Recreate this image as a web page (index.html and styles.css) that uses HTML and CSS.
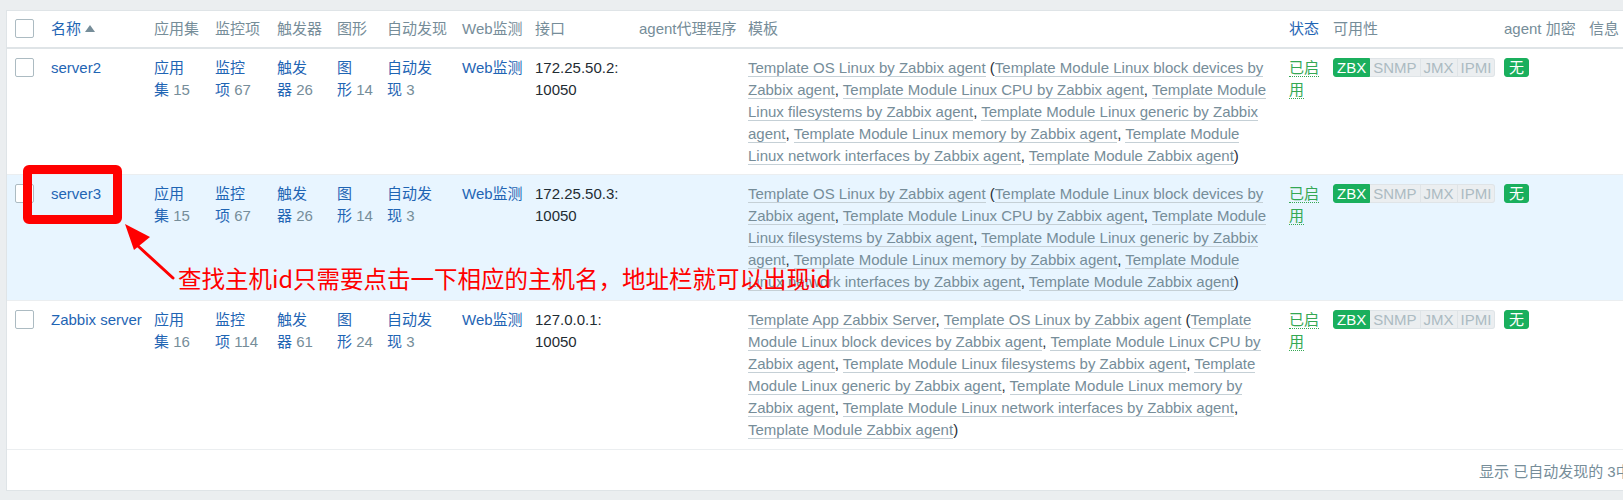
FILE: index.html
```html
<!DOCTYPE html>
<html lang="zh-CN">
<head>
<meta charset="utf-8">
<title>主机</title>
<link rel="stylesheet" href="styles.css">
</head>
<body>
<div class="panel">
  <table class="list">
    <colgroup>
      <col class="c-cb"><col class="c-name"><col class="c-app"><col class="c-items"><col class="c-trig"><col class="c-graph"><col class="c-disc"><col class="c-web"><col class="c-iface"><col class="c-proxy"><col class="c-tpl"><col class="c-status"><col class="c-avail"><col class="c-enc"><col class="c-info">
    </colgroup>
    <thead>
      <tr>
        <th class="cb-cell"><span class="checkbox"></span></th>
        <th><a class="link">名称</a><span class="arrow-up"></span></th>
        <th>应用集</th>
        <th>监控项</th>
        <th>触发器</th>
        <th>图形</th>
        <th>自动发现</th>
        <th>Web监测</th>
        <th>接口</th>
        <th>agent代理程序</th>
        <th>模板</th>
        <th><a class="link">状态</a></th>
        <th>可用性</th>
        <th>agent 加密</th>
        <th>信息</th>
      </tr>
    </thead>
    <tbody>
      <tr>
        <td class="cb-cell"><span class="checkbox"></span></td>
        <td><a class="link">server2</a></td>
        <td><a class="link">应用集</a>&nbsp;<span class="count">15</span></td>
        <td><a class="link">监控项</a>&nbsp;<span class="count">67</span></td>
        <td><a class="link">触发器</a>&nbsp;<span class="count">26</span></td>
        <td><a class="link">图形</a>&nbsp;<span class="count">14</span></td>
        <td><a class="link">自动发现</a>&nbsp;<span class="count">3</span></td>
        <td><a class="link">Web监测</a></td>
        <td class="iface">172.25.50.2:<br>10050</td>
        <td></td>
        <td class="tpl-cell"><a class="tpl">Template OS Linux by Zabbix agent</a> (<a class="tpl">Template Module Linux block devices by Zabbix agent</a>, <a class="tpl">Template Module Linux CPU by Zabbix agent</a>, <a class="tpl">Template Module Linux filesystems by Zabbix agent</a>, <a class="tpl">Template Module Linux generic by Zabbix agent</a>, <a class="tpl">Template Module Linux memory by Zabbix agent</a>, <a class="tpl">Template Module Linux network interfaces by Zabbix agent</a>, <a class="tpl">Template Module Zabbix agent</a>)</td>
        <td><a class="status">已启用</a></td>
        <td><span class="avail"><span class="badge on">ZBX</span><span class="badge off">SNMP</span><span class="badge off">JMX</span><span class="badge off">IPMI</span></span></td>
        <td><span class="badge on solo">无</span></td>
        <td></td>
      </tr>
      <tr class="hover">
        <td class="cb-cell"><span class="checkbox"></span></td>
        <td><a class="link">server3</a></td>
        <td><a class="link">应用集</a>&nbsp;<span class="count">15</span></td>
        <td><a class="link">监控项</a>&nbsp;<span class="count">67</span></td>
        <td><a class="link">触发器</a>&nbsp;<span class="count">26</span></td>
        <td><a class="link">图形</a>&nbsp;<span class="count">14</span></td>
        <td><a class="link">自动发现</a>&nbsp;<span class="count">3</span></td>
        <td><a class="link">Web监测</a></td>
        <td class="iface">172.25.50.3:<br>10050</td>
        <td></td>
        <td class="tpl-cell"><a class="tpl">Template OS Linux by Zabbix agent</a> (<a class="tpl">Template Module Linux block devices by Zabbix agent</a>, <a class="tpl">Template Module Linux CPU by Zabbix agent</a>, <a class="tpl">Template Module Linux filesystems by Zabbix agent</a>, <a class="tpl">Template Module Linux generic by Zabbix agent</a>, <a class="tpl">Template Module Linux memory by Zabbix agent</a>, <a class="tpl">Template Module Linux network interfaces by Zabbix agent</a>, <a class="tpl">Template Module Zabbix agent</a>)</td>
        <td><a class="status">已启用</a></td>
        <td><span class="avail"><span class="badge on">ZBX</span><span class="badge off">SNMP</span><span class="badge off">JMX</span><span class="badge off">IPMI</span></span></td>
        <td><span class="badge on solo">无</span></td>
        <td></td>
      </tr>
      <tr class="last">
        <td class="cb-cell"><span class="checkbox"></span></td>
        <td><a class="link">Zabbix server</a></td>
        <td><a class="link">应用集</a>&nbsp;<span class="count">16</span></td>
        <td><a class="link">监控项</a>&nbsp;<span class="count">114</span></td>
        <td><a class="link">触发器</a>&nbsp;<span class="count">61</span></td>
        <td><a class="link">图形</a>&nbsp;<span class="count">24</span></td>
        <td><a class="link">自动发现</a>&nbsp;<span class="count">3</span></td>
        <td><a class="link">Web监测</a></td>
        <td class="iface">127.0.0.1:<br>10050</td>
        <td></td>
        <td class="tpl-cell"><a class="tpl">Template App Zabbix Server</a>, <a class="tpl">Template OS Linux by Zabbix agent</a> (<a class="tpl">Template Module Linux block devices by Zabbix agent</a>, <a class="tpl">Template Module Linux CPU by Zabbix agent</a>, <a class="tpl">Template Module Linux filesystems by Zabbix agent</a>, <a class="tpl">Template Module Linux generic by Zabbix agent</a>, <a class="tpl">Template Module Linux memory by Zabbix agent</a>, <a class="tpl">Template Module Linux network interfaces by Zabbix agent</a>, <a class="tpl">Template Module Zabbix agent</a>)</td>
        <td><a class="status">已启用</a></td>
        <td><span class="avail"><span class="badge on">ZBX</span><span class="badge off">SNMP</span><span class="badge off">JMX</span><span class="badge off">IPMI</span></span></td>
        <td><span class="badge on solo">无</span></td>
        <td></td>
      </tr>
    </tbody>
  </table>
  <div class="table-stats">显示 已自动发现的 3中的3</div>
</div>

<div class="note-box"></div>
<svg class="note-arrow" width="80" height="80" viewBox="0 0 80 80">
  <line x1="16" y1="24" x2="51" y2="56" stroke="#ff0000" stroke-width="3" stroke-linecap="round"/>
  <polygon points="3,2 28,15 12,28" fill="#ff0000"/>
</svg>
<div class="note-text">查找主机id只需要点击一下相应的主机名，地址栏就可以出现id</div>
</body>
</html>
```

FILE: styles.css
```css
html, body {
  margin: 0;
  padding: 0;
  overflow: hidden;
}

body {
  position: relative;
  width: 1623px;
  height: 500px;
  background: #ebeef0;
  font-family: "Liberation Sans", Arial, "Noto Sans CJK SC", sans-serif;
  font-size: 15px;
  line-height: 22px;
  color: #1f2c33;
}

.panel {
  margin: 10px 0 0 6px;
  width: 1652px;
  background: #ffffff;
  border: 1px solid #dfe4e7;
}

.list {
  width: 1652px;
  table-layout: fixed;
  border-collapse: collapse;
  border-spacing: 0;
}

.c-cb { width: 44px; }
.c-name { width: 103px; }
.c-app { width: 61px; }
.c-items { width: 62px; }
.c-trig { width: 60px; }
.c-graph { width: 50px; }
.c-disc { width: 75px; }
.c-web { width: 73px; }
.c-iface { width: 104px; }
.c-proxy { width: 109px; }
.c-tpl { width: 541px; }
.c-status { width: 44px; }
.c-avail { width: 171px; }
.c-enc { width: 85px; }
.c-info { width: 70px; }

.list th {
  text-align: left;
  font-weight: normal;
  color: #768d99;
  padding: 7px 8px 7px 0;
  white-space: nowrap;
  border-bottom: 2px solid #dfe4e7;
  vertical-align: top;
}

.list td {
  padding: 8px 8px 7px 0;
  vertical-align: top;
  border-bottom: 1px solid #ebeef0;
}

.list tr.last td {
  padding-bottom: 8px;
}

.list th.cb-cell,
.list td.cb-cell {
  padding-left: 8px;
}

.list td.tpl-cell {
  padding-right: 16px;
}

.list tr.hover td {
  background: #e8f5ff;
}

.checkbox {
  display: block;
  box-sizing: border-box;
  width: 19px;
  height: 19px;
  margin-top: 1px;
  background: #ffffff;
  border: 1px solid #acbbc2;
  border-radius: 2px;
}

.link {
  color: #1f65b4;
  text-decoration: none;
}

.arrow-up {
  display: inline-block;
  width: 0;
  height: 0;
  margin-left: 4px;
  vertical-align: 2px;
  border-left: 5px solid transparent;
  border-right: 5px solid transparent;
  border-bottom: 7px solid #768d99;
}

.count {
  color: #768d99;
}

.iface {
  color: #1f2c33;
}

.tpl {
  color: #768d99;
  text-decoration: none;
  border-bottom: 1px solid #c5d0d6;
}

.status {
  color: #34a853;
  text-decoration: none;
  border-bottom: 1px dotted #34a853;
}

.avail {
  display: inline-flex;
  vertical-align: top;
  margin-top: 1px;
}

.badge {
  display: inline-block;
  box-sizing: border-box;
  height: 19px;
  line-height: 17px;
  padding: 0 3px;
  font-size: 15px;
  border: 1px solid #dfe4e7;
  border-left-width: 0;
}

.badge.on {
  background: #1aaf5d;
  border-color: #1aaf5d;
  color: #ffffff;
}

.badge.off {
  background: #ebeef0;
  color: #acbbc2;
}

.avail .badge:first-child {
  border-left-width: 1px;
  border-radius: 3px 0 0 3px;
}

.avail .badge:last-child {
  border-radius: 0 3px 3px 0;
}

.badge.solo {
  border-left-width: 1px;
  border-radius: 3px;
  padding: 0 4px;
  vertical-align: top;
  margin-top: 1px;
}

.table-stats {
  text-align: right;
  color: #768d99;
  padding: 11px 5px 7px 0;
}

.note-box {
  position: absolute;
  left: 23px;
  top: 165px;
  width: 99px;
  height: 59px;
  box-sizing: border-box;
  border: 9px solid #ff0000;
  border-radius: 6px;
}

.note-arrow {
  position: absolute;
  left: 122px;
  top: 222px;
}

.note-text {
  position: absolute;
  left: 178px;
  top: 267px;
  color: #ff0000;
  font-family: "Noto Sans CJK SC", sans-serif;
  font-size: 23.5px;
  line-height: 1;
  white-space: nowrap;
}
```
